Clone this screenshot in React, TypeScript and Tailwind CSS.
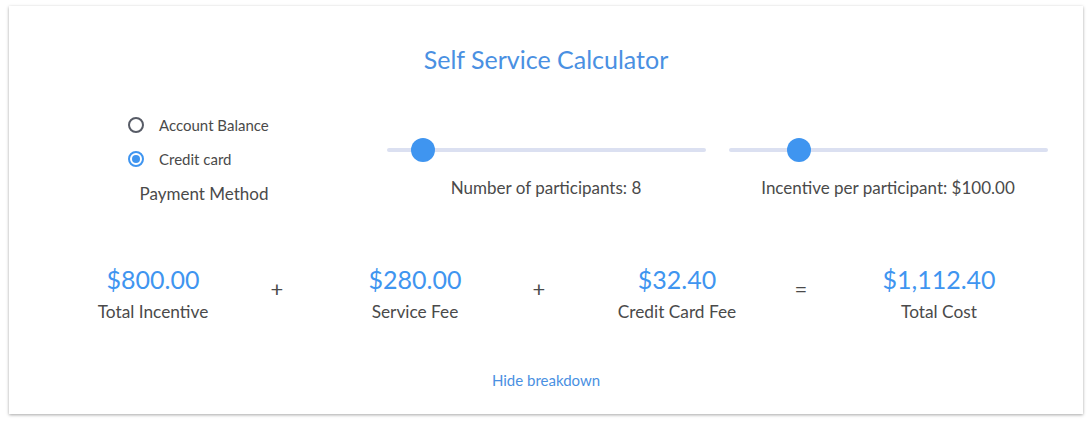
import { useState } from "react";

const font = { fontFamily: "Lato, 'Open Sans', sans-serif" };

function Slider({ pct, label }: { pct: number; label: string }) {
  return (
    <div className="flex flex-col items-center">
      <div className="relative w-[319px] h-6 flex items-center">
        <div className="w-full h-[4px] rounded-full bg-[#dbe0f1]" />
        <div
          className="absolute top-0 w-6 h-6 -ml-3 rounded-full bg-[#3f95f0]"
          style={{ left: `${pct}%` }}
        />
      </div>
      <div className="mt-[14px] text-[17px] leading-6 text-[#4a4a4a]">{label}</div>
    </div>
  );
}

function Radio({ checked, label }: { checked: boolean; label: string }) {
  return (
    <div className="flex items-center h-[34px]">
      <span
        className={
          checked
            ? "w-4 h-4 rounded-full border-2 border-[#3f95f0] flex items-center justify-center"
            : "w-4 h-4 rounded-full border-2 border-[#575b66]"
        }
      >
        {checked && <span className="w-2 h-2 rounded-full bg-[#3f95f0]" />}
      </span>
      <span className="ml-[15px] text-[15px] text-[#4a4a4a]">{label}</span>
    </div>
  );
}

function Amount({ value, label }: { value: string; label: string }) {
  return (
    <div className="w-[220px] flex flex-col items-center">
      <div className="text-[25px] leading-8 text-[#3f95f0]">{value}</div>
      <div className="mt-[5px] text-[17.3px] leading-6 text-[#4a4a4a]">{label}</div>
    </div>
  );
}

function Op({ sign }: { sign: string }) {
  return (
    <div className="w-[28px] mr-[14px] -mt-[10px] text-center text-[22px] text-[#4a4a4a]">{sign}</div>
  );
}

export default function App() {
  const [showBreakdown] = useState(true);
  return (
    <div className="min-h-screen bg-white pt-[6px] px-[9px]" style={font}>
      <div className="w-[1074px] h-[408px] bg-white shadow-[0_1px_3px_rgba(0,0,0,0.35)] px-6 pt-[37px]">
        <h1 className="text-center text-[25px] leading-8 text-[#4a90e2]">Self Service Calculator</h1>

        <div className="mt-[33px] grid grid-cols-3">
          <div className="flex flex-col">
            <div className="ml-[95px]">
              <Radio checked={false} label="Account Balance" />
              <Radio checked label="Credit card" />
            </div>
            <div className="mt-[6px] text-center text-[17px] leading-6 text-[#4a4a4a]">Payment Method</div>
          </div>
          <div className="pt-[30px]">
            <Slider pct={11.3} label="Number of participants: 8" />
          </div>
          <div className="pt-[30px]">
            <Slider pct={22} label="Incentive per participant: $100.00" />
          </div>
        </div>

        {showBreakdown && (
          <div className="mt-[57px] flex justify-center items-center">
            <Amount value="$800.00" label="Total Incentive" />
            <Op sign="+" />
            <Amount value="$280.00" label="Service Fee" />
            <Op sign="+" />
            <Amount value="$32.40" label="Credit Card Fee" />
            <Op sign="=" />
            <Amount value="$1,112.40" label="Total Cost" />
          </div>
        )}

        <div className="mt-[44px] text-center">
          <button className="text-[15px] leading-5 text-[#4a90e2] cursor-pointer">Hide breakdown</button>
        </div>
      </div>
    </div>
  );
}
